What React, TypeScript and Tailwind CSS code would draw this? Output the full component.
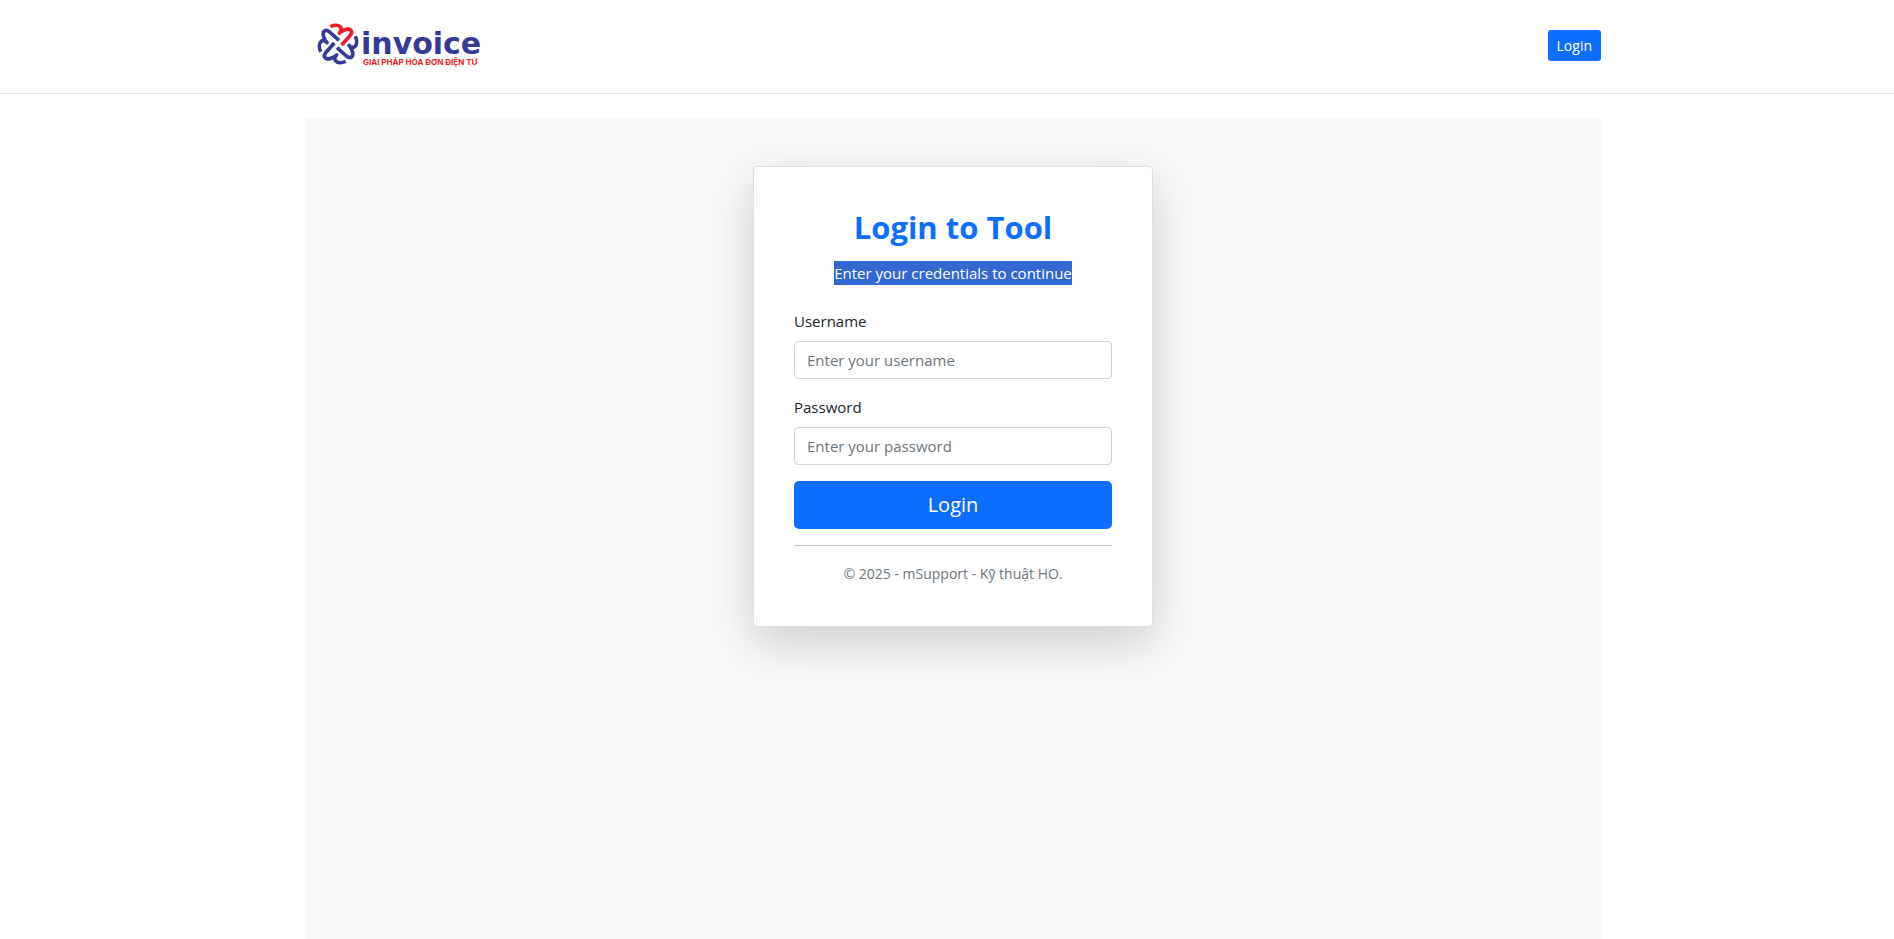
import React from "react";

const petal =
  "M-23 -52 C-12 -57 2 -58 8 -50 C12 -44 9 -37 4 -33 C14 -42 30 -48 38 -42 C43 -37 41 -31 36 -25 L11 3";

function Logo() {
  return (
    <svg viewBox="0 0 166 48" className="h-12 w-[166px]" role="img" aria-label="mInvoice">
      <g transform="translate(21 24) scale(0.3333)" fill="none" strokeWidth="11" strokeLinejoin="round">
        <path d={petal} stroke="#343a95" transform="rotate(90)" />
        <path d={petal} stroke="#343a95" transform="rotate(180)" />
        <path d={petal} stroke="#343a95" transform="rotate(270)" />
        <path d={petal} stroke="#ed1c24" />
      </g>
      <text x="44" y="34" fontSize="30" fill="#343a95" className="font-['DejaVu_Sans',sans-serif] font-bold">
        invoice
      </text>
      <text x="46" y="45" fontSize="8" fill="#ed1c24" className="font-['Inter',sans-serif] font-bold">
        GIẢI PHÁP HÓA ĐƠN ĐIỆN TỬ
      </text>
    </svg>
  );
}

type FieldProps = { id: string; label: string; type: string; placeholder: string };

function Field({ id, label, type, placeholder }: FieldProps) {
  return (
    <div className="mb-4">
      <label htmlFor={id} className="mb-2 block leading-6">
        {label}
      </label>
      <input
        id={id}
        type={type}
        placeholder={placeholder}
        className="block h-[38px] w-full rounded border border-[#ced4da] bg-white px-3 leading-6 placeholder:text-[#6c757d]"
      />
    </div>
  );
}

export default function App() {
  return (
    <div className="flex min-h-screen flex-col bg-white font-['Open_Sans','Noto_Sans',sans-serif] text-[15px] text-[#212529]">
      <header className="mb-6 border-b border-[#dee2e6] pl-3">
        <div className="mx-auto flex h-[93px] w-full max-w-[1296px] items-start justify-between pl-3">
          <a href="#" className="mt-5">
            <Logo />
          </a>
          <a
            href="#login"
            className="mt-[30px] flex h-[31px] items-center rounded-[3px] bg-[#0d6efd] px-[9px] text-sm text-white"
          >
            Login
          </a>
        </div>
      </header>
      <div className="flex flex-1 pl-3">
        <main className="mx-auto w-full max-w-[1296px] bg-[#f8f9fa] py-12">
          <section className="mx-auto w-full max-w-[400px] rounded border border-[#dfdfdf] bg-white p-10 shadow-[0_16px_48px_rgba(0,0,0,0.175)]">
            <h1 className="mb-[14px] text-center text-[31px] leading-10 font-bold text-[#0d6efd]">Login to Tool</h1>
            <p className="mb-6 text-center leading-6">
              <span className="inline-block bg-[#3367d1] text-white">Enter your credentials to continue</span>
            </p>
            <form onSubmit={(e: React.FormEvent) => e.preventDefault()}>
              <Field id="username" label="Username" type="text" placeholder="Enter your username" />
              <Field id="password" label="Password" type="password" placeholder="Enter your password" />
              <button type="submit" className="h-12 w-full rounded-[5px] bg-[#0d6efd] text-xl text-white">
                Login
              </button>
            </form>
            <hr className="my-4 border-[#c7c8ca]" />
            <p className="text-center text-sm leading-6 text-[#6c757d]">© 2025 - mSupport - Kỹ thuật HO.</p>
          </section>
        </main>
      </div>
    </div>
  );
}
